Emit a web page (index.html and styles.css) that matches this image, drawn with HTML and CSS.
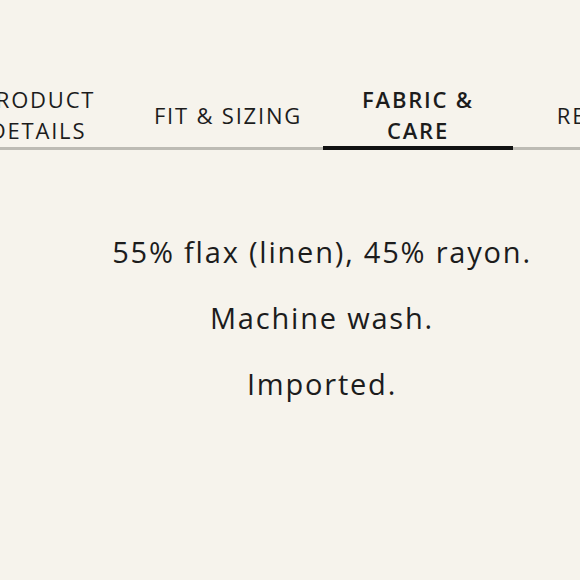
FILE: index.html
```html
<!DOCTYPE html>
<html lang="en">
<head>
  <meta charset="UTF-8">
  <title>Fabric & Care</title>
  <link rel="stylesheet" href="styles.css">
</head>
<body>
  <div class="tabs">
    <div class="tab-list">
      <div class="tab">PRODUCT<br>DETAILS</div>
      <div class="tab">FIT &amp; SIZING</div>
      <div class="tab active">FABRIC &amp;<br>CARE</div>
      <div class="tab">REVIEWS</div>
    </div>
  </div>

  <div class="content">
    <p>55% flax (linen), 45% rayon.</p>
    <p>Machine wash.</p>
    <p>Imported.</p>
  </div>
</body>
</html>
```

FILE: styles.css
```css
* {
  box-sizing: border-box;
}
body {
  margin: 0;
  font-family: 'Open Sans', sans-serif;
  background-color: #f6f3ec;
  color: #1c1c1c;
}
.tabs {
  padding-top: 83px;
  overflow: hidden;
}
.tab-list {
  display: flex;
  margin-left: -57px;
  box-shadow: inset 0 -3px 0 #bdbbb4;
}
.tab {
  flex: 0 0 190px;
  height: 67px;
  padding-top: 1px;
  display: flex;
  align-items: center;
  justify-content: center;
  text-align: center;
  font-size: 22px;
  line-height: 31px;
  letter-spacing: 1.8px;
  border-bottom: 4px solid transparent;
}
.tab.active {
  font-weight: 600;
  border-bottom-color: #111;
}
.content {
  padding: 83px 0 0 64px;
  display: flex;
  flex-direction: column;
  gap: 28px;
  text-align: center;
}
.content p {
  margin: 0;
  font-size: 29px;
  line-height: 38px;
  letter-spacing: 1.8px;
}
```
